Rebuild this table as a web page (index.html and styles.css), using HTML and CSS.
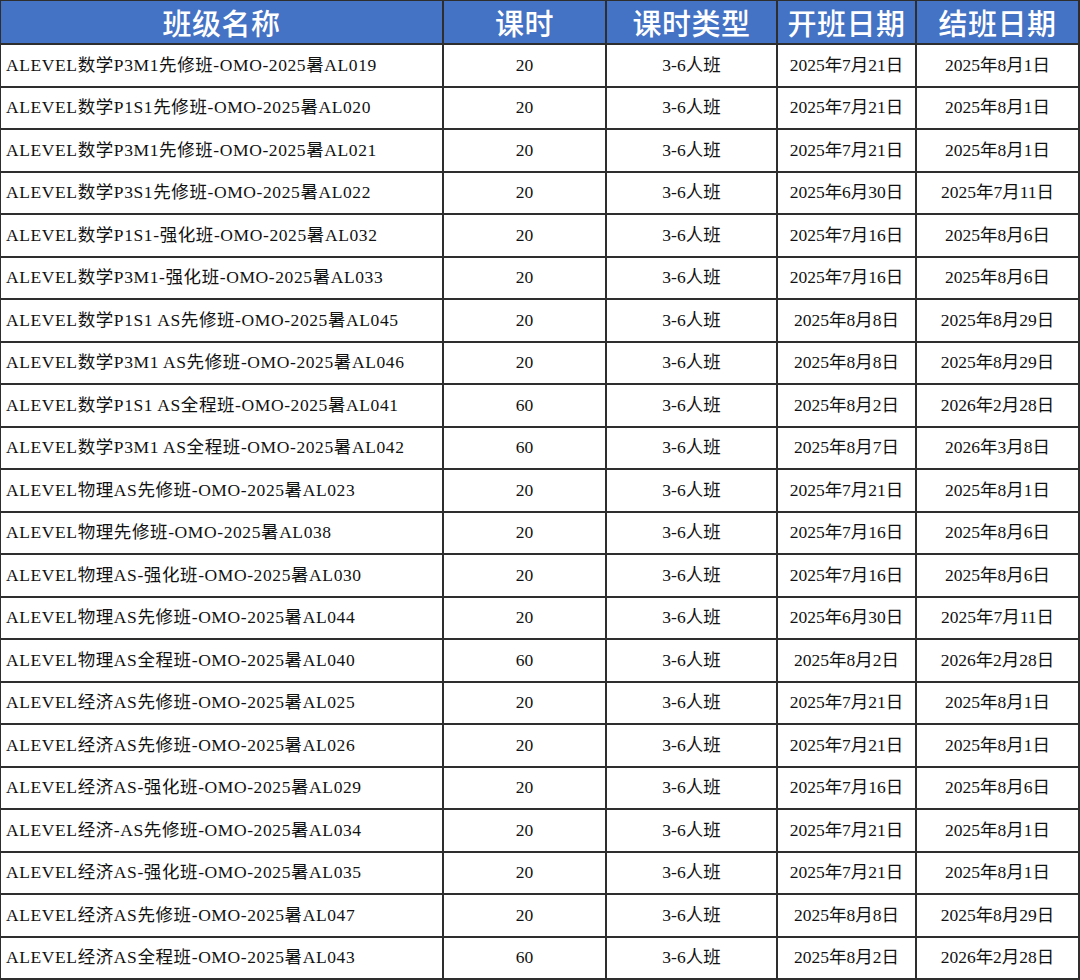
FILE: index.html
```html
<!DOCTYPE html>
<html lang="zh-CN">
<head>
<meta charset="utf-8">
<title>课程表</title>
<link rel="stylesheet" href="styles.css">
</head>
<body>
<div class="sheet">
  <div class="hd">班级名称</div><div class="hd">课时</div><div class="hd">课时类型</div><div class="hd">开班日期</div><div class="hd">结班日期</div>

  <div class="c name">ALEVEL数学P3M1先修班-OMO-2025暑AL019</div><div class="c">20</div><div class="c">3-6人班</div><div class="c">2025年7月21日</div><div class="c">2025年8月1日</div>
  <div class="c name">ALEVEL数学P1S1先修班-OMO-2025暑AL020</div><div class="c">20</div><div class="c">3-6人班</div><div class="c">2025年7月21日</div><div class="c">2025年8月1日</div>
  <div class="c name">ALEVEL数学P3M1先修班-OMO-2025暑AL021</div><div class="c">20</div><div class="c">3-6人班</div><div class="c">2025年7月21日</div><div class="c">2025年8月1日</div>
  <div class="c name">ALEVEL数学P3S1先修班-OMO-2025暑AL022</div><div class="c">20</div><div class="c">3-6人班</div><div class="c">2025年6月30日</div><div class="c">2025年7月11日</div>
  <div class="c name">ALEVEL数学P1S1-强化班-OMO-2025暑AL032</div><div class="c">20</div><div class="c">3-6人班</div><div class="c">2025年7月16日</div><div class="c">2025年8月6日</div>
  <div class="c name">ALEVEL数学P3M1-强化班-OMO-2025暑AL033</div><div class="c">20</div><div class="c">3-6人班</div><div class="c">2025年7月16日</div><div class="c">2025年8月6日</div>
  <div class="c name">ALEVEL数学P1S1 AS先修班-OMO-2025暑AL045</div><div class="c">20</div><div class="c">3-6人班</div><div class="c">2025年8月8日</div><div class="c">2025年8月29日</div>
  <div class="c name">ALEVEL数学P3M1 AS先修班-OMO-2025暑AL046</div><div class="c">20</div><div class="c">3-6人班</div><div class="c">2025年8月8日</div><div class="c">2025年8月29日</div>
  <div class="c name">ALEVEL数学P1S1 AS全程班-OMO-2025暑AL041</div><div class="c">60</div><div class="c">3-6人班</div><div class="c">2025年8月2日</div><div class="c">2026年2月28日</div>
  <div class="c name">ALEVEL数学P3M1 AS全程班-OMO-2025暑AL042</div><div class="c">60</div><div class="c">3-6人班</div><div class="c">2025年8月7日</div><div class="c">2026年3月8日</div>
  <div class="c name">ALEVEL物理AS先修班-OMO-2025暑AL023</div><div class="c">20</div><div class="c">3-6人班</div><div class="c">2025年7月21日</div><div class="c">2025年8月1日</div>
  <div class="c name">ALEVEL物理先修班-OMO-2025暑AL038</div><div class="c">20</div><div class="c">3-6人班</div><div class="c">2025年7月16日</div><div class="c">2025年8月6日</div>
  <div class="c name">ALEVEL物理AS-强化班-OMO-2025暑AL030</div><div class="c">20</div><div class="c">3-6人班</div><div class="c">2025年7月16日</div><div class="c">2025年8月6日</div>
  <div class="c name">ALEVEL物理AS先修班-OMO-2025暑AL044</div><div class="c">20</div><div class="c">3-6人班</div><div class="c">2025年6月30日</div><div class="c">2025年7月11日</div>
  <div class="c name">ALEVEL物理AS全程班-OMO-2025暑AL040</div><div class="c">60</div><div class="c">3-6人班</div><div class="c">2025年8月2日</div><div class="c">2026年2月28日</div>
  <div class="c name">ALEVEL经济AS先修班-OMO-2025暑AL025</div><div class="c">20</div><div class="c">3-6人班</div><div class="c">2025年7月21日</div><div class="c">2025年8月1日</div>
  <div class="c name">ALEVEL经济AS先修班-OMO-2025暑AL026</div><div class="c">20</div><div class="c">3-6人班</div><div class="c">2025年7月21日</div><div class="c">2025年8月1日</div>
  <div class="c name">ALEVEL经济AS-强化班-OMO-2025暑AL029</div><div class="c">20</div><div class="c">3-6人班</div><div class="c">2025年7月16日</div><div class="c">2025年8月6日</div>
  <div class="c name">ALEVEL经济-AS先修班-OMO-2025暑AL034</div><div class="c">20</div><div class="c">3-6人班</div><div class="c">2025年7月21日</div><div class="c">2025年8月1日</div>
  <div class="c name">ALEVEL经济AS-强化班-OMO-2025暑AL035</div><div class="c">20</div><div class="c">3-6人班</div><div class="c">2025年7月21日</div><div class="c">2025年8月1日</div>
  <div class="c name">ALEVEL经济AS先修班-OMO-2025暑AL047</div><div class="c">20</div><div class="c">3-6人班</div><div class="c">2025年8月8日</div><div class="c">2025年8月29日</div>
  <div class="c name">ALEVEL经济AS全程班-OMO-2025暑AL043</div><div class="c">60</div><div class="c">3-6人班</div><div class="c">2025年8月2日</div><div class="c">2026年2月28日</div>
</div>
</body>
</html>
```
FILE: styles.css
```css
html, body {
  margin: 0;
  padding: 0;
  background: #ffffff;
}

.sheet {
  box-sizing: border-box;
  width: 1080px;
  height: 980px;
  display: grid;
  grid-template-columns: 441px 161px 169px 137px 1fr;
  grid-template-rows: 42px repeat(22, 1fr);
  gap: 2px;
  padding: 1px 2px 2px 1px;
  background: #2e2e2e;
}

.hd {
  background: #4472c4;
  color: #ffffff;
  font-family: "Noto Sans CJK SC", sans-serif;
  font-weight: 500;
  font-size: 29px;
  letter-spacing: 0.5px;
  line-height: 1;
  display: flex;
  align-items: center;
  justify-content: center;
  padding-top: 1px;
}

.c {
  background: #ffffff;
  color: #111111;
  font-family: "Liberation Serif", "Noto Sans CJK SC", serif;
  font-size: 17.5px;
  line-height: 1;
  display: flex;
  align-items: center;
  justify-content: center;
  white-space: nowrap;
}

.name {
  justify-content: flex-start;
  padding-left: 5px;
  letter-spacing: 0.6px;
}
```
